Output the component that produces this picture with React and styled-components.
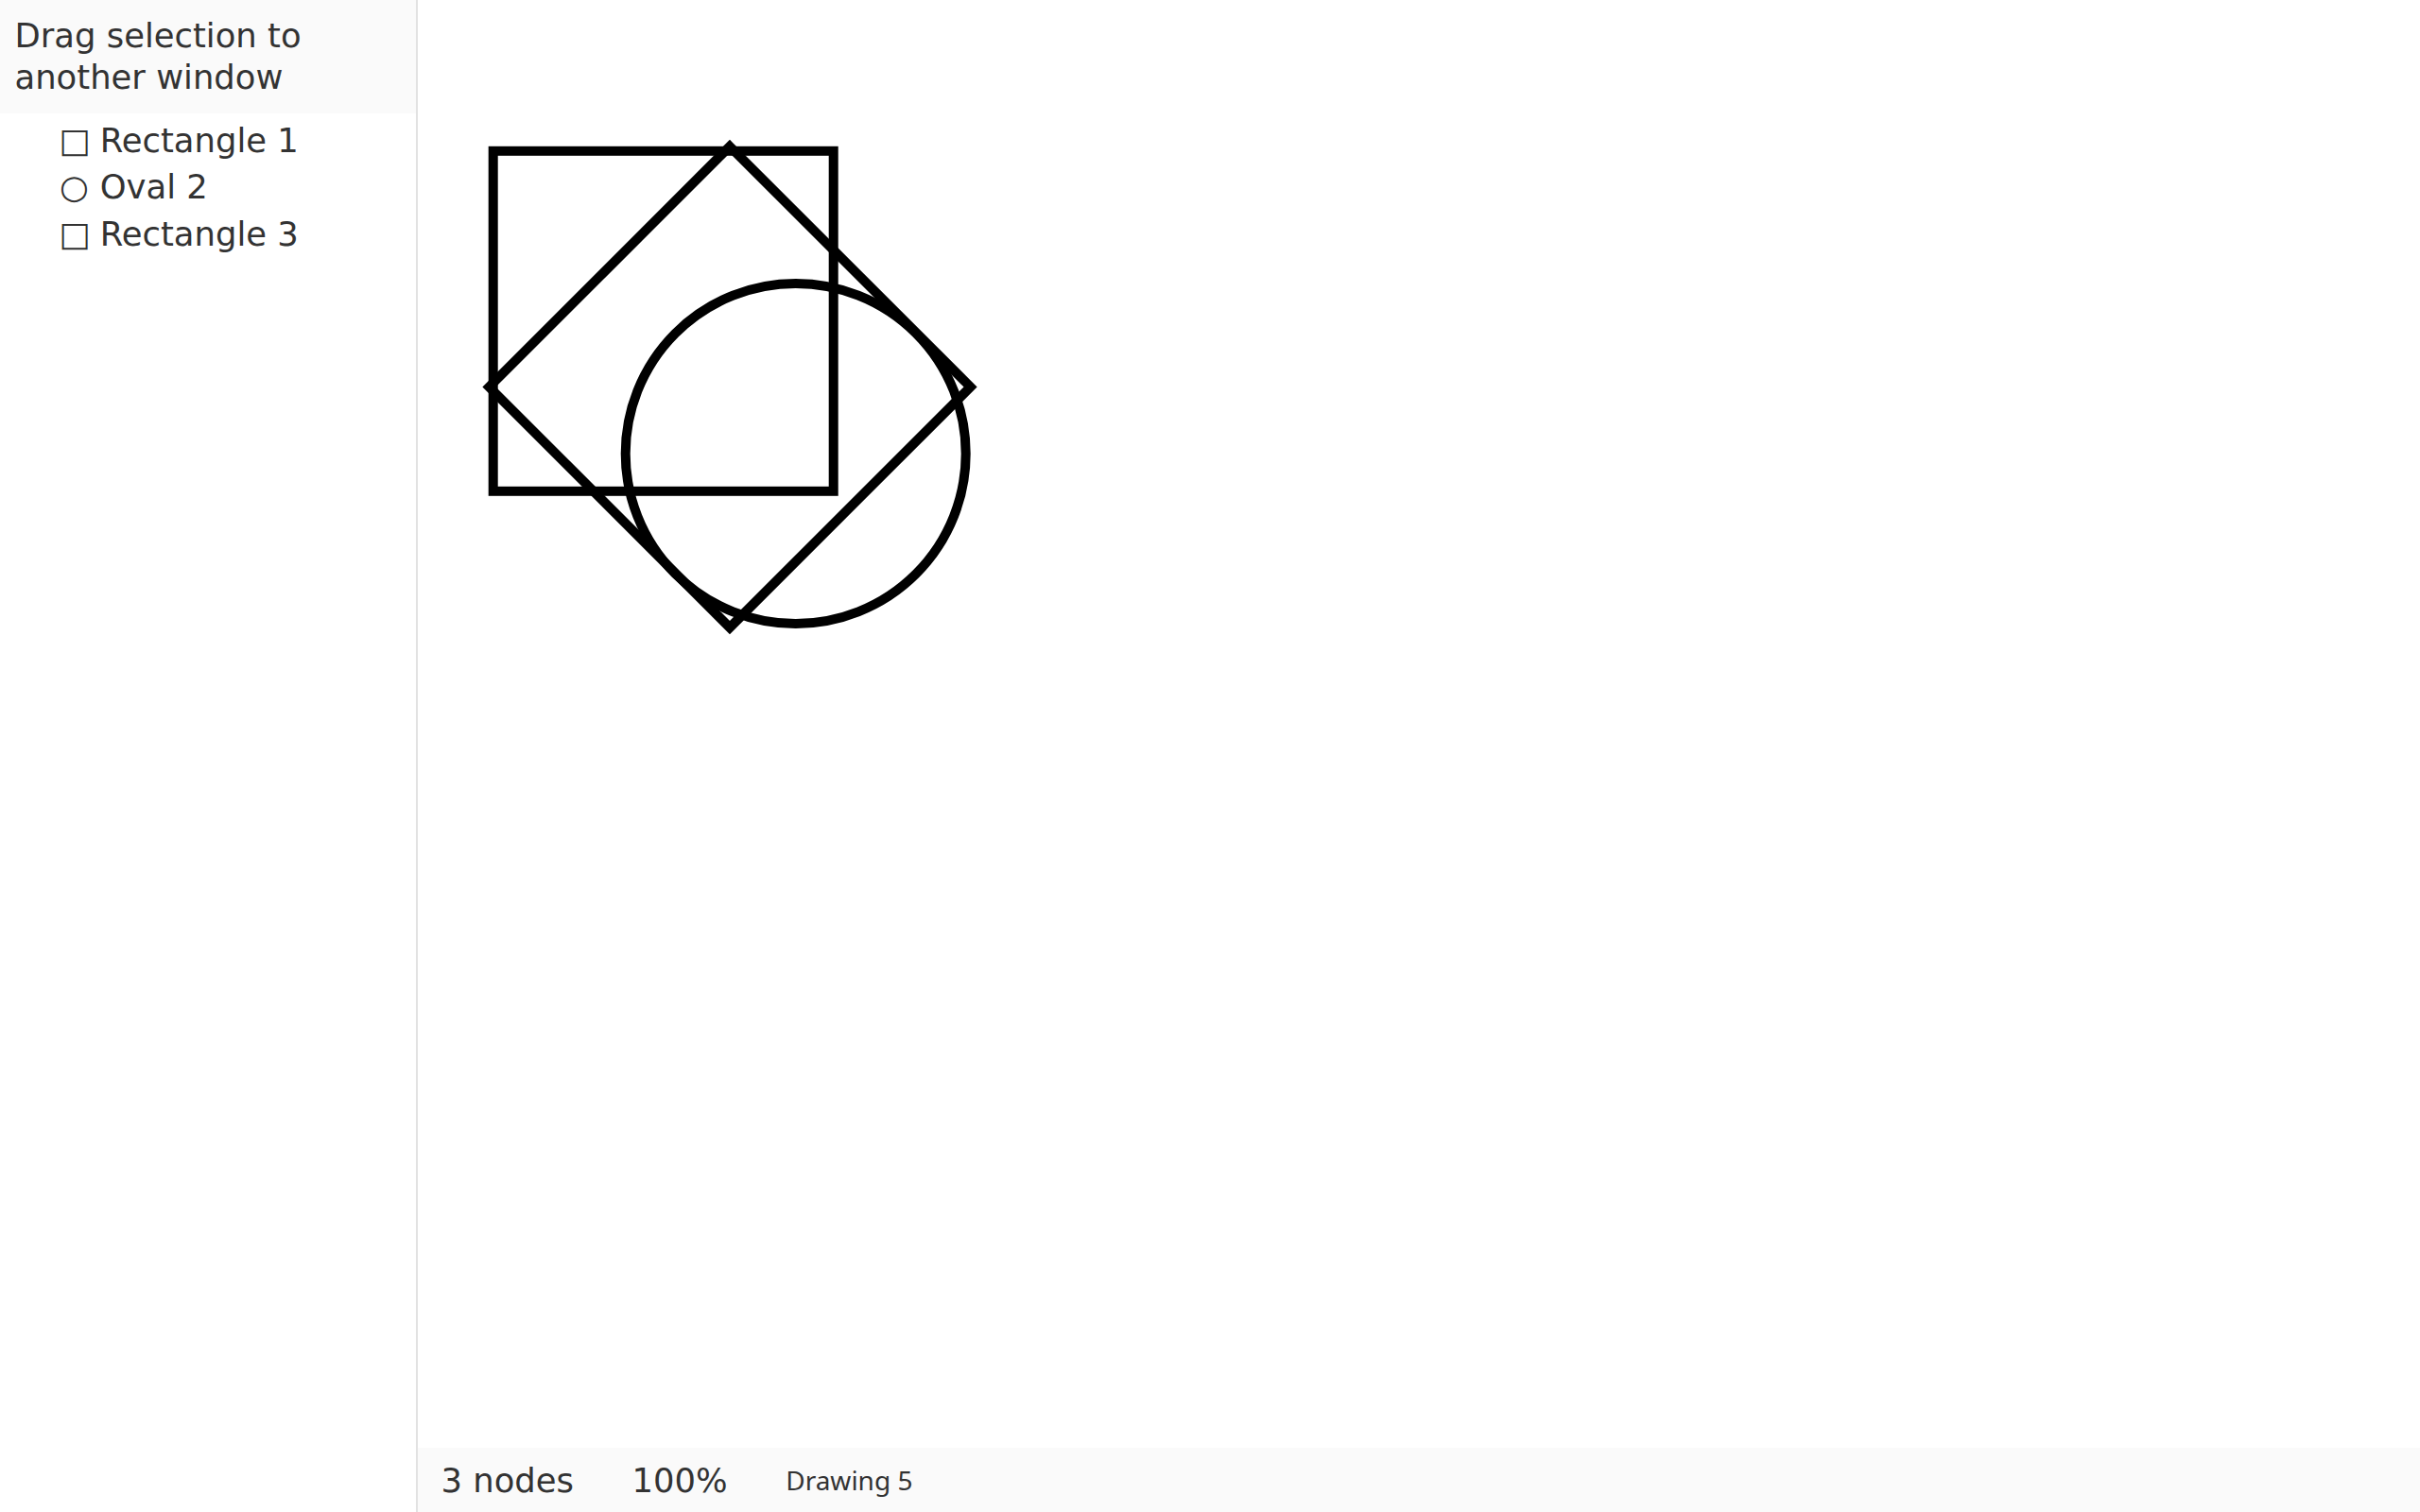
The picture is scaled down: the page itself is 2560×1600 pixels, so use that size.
import React from "react";
import styled, { createGlobalStyle } from "styled-components";

const GlobalStyle = createGlobalStyle`
  html, body {
    margin: 0;
    padding: 0;
    height: 100%;
    background: #ffffff;
  }
  #root {
    height: 100%;
  }
`;

const Layout = styled.div`
  display: grid;
  grid-template-columns: 442px 1fr;
  height: 100vh;
  font-family: "DejaVu Sans", Verdana, sans-serif;
  color: #333333;
`;

const Sidebar = styled.aside`
  border-right: 2px solid #e2e2e2;
  background: #ffffff;
  display: flex;
  flex-direction: column;
`;

const Header = styled.div`
  background: #fafafa;
  padding: 16.4px 15.5px;
  font-size: 35.4px;
  line-height: 43.6px;
`;

const List = styled.ul`
  list-style: none;
  margin: 0;
  padding: 4px 0 0 62.5px;
`;

const Item = styled.li`
  font-size: 35.4px;
  line-height: 49.5px;
  white-space: nowrap;
`;

const Glyph = styled.span`
  display: inline-block;
  width: 32px;
  text-align: center;
`;

const Main = styled.main`
  display: flex;
  flex-direction: column;
  min-width: 0;
`;

const Canvas = styled.div`
  flex: 1;
  position: relative;
  background: #ffffff;
`;

const Drawing = styled.svg`
  position: absolute;
  inset: 0;
  width: 100%;
  height: 100%;
`;

const StatusBar = styled.footer`
  height: 68px;
  flex: none;
  background: #fafafa;
  display: flex;
  align-items: center;
  gap: 61.5px;
  padding: 0 24.5px;
`;

const StatusText = styled.span`
  font-size: ${(p) => (p.$small ? "28px" : "35.4px")};
  font-family: ${(p) =>
    p.$small ? '"Noto Sans", "DejaVu Sans", sans-serif' : '"DejaVu Sans", sans-serif'};
  white-space: nowrap;
`;

const items = [
  { icon: "\u25A1", label: "Rectangle 1" },
  { icon: "\u25CB", label: "Oval 2" },
  { icon: "\u25A1", label: "Rectangle 3" },
];

const side = 360;
const half = side / Math.SQRT2;
const dc = { x: 330, y: 409.5 };

export default function App() {
  return (
    <>
      <GlobalStyle />
      <Layout>
        <Sidebar>
          <Header>
            Drag selection to
            <br />
            another window
          </Header>
          <List>
            {items.map((it) => (
              <Item key={it.label}>
                <Glyph>{it.icon}</Glyph> {it.label}
              </Item>
            ))}
          </List>
        </Sidebar>
        <Main>
          <Canvas>
            <Drawing>
              <g fill="none" stroke="#000" strokeWidth="10" strokeLinejoin="miter">
                <rect x="79.7" y="159.8" width={side} height={side} />
                <circle cx="399.7" cy="480" r="180" />
                <polygon
                  points={`${dc.x},${dc.y - half} ${dc.x + half},${dc.y} ${dc.x},${dc.y + half} ${dc.x - half},${dc.y}`}
                />
              </g>
            </Drawing>
          </Canvas>
          <StatusBar>
            <StatusText>3 nodes</StatusText>
            <StatusText>100%</StatusText>
            <StatusText $small>Drawing 5</StatusText>
          </StatusBar>
        </Main>
      </Layout>
    </>
  );
}
